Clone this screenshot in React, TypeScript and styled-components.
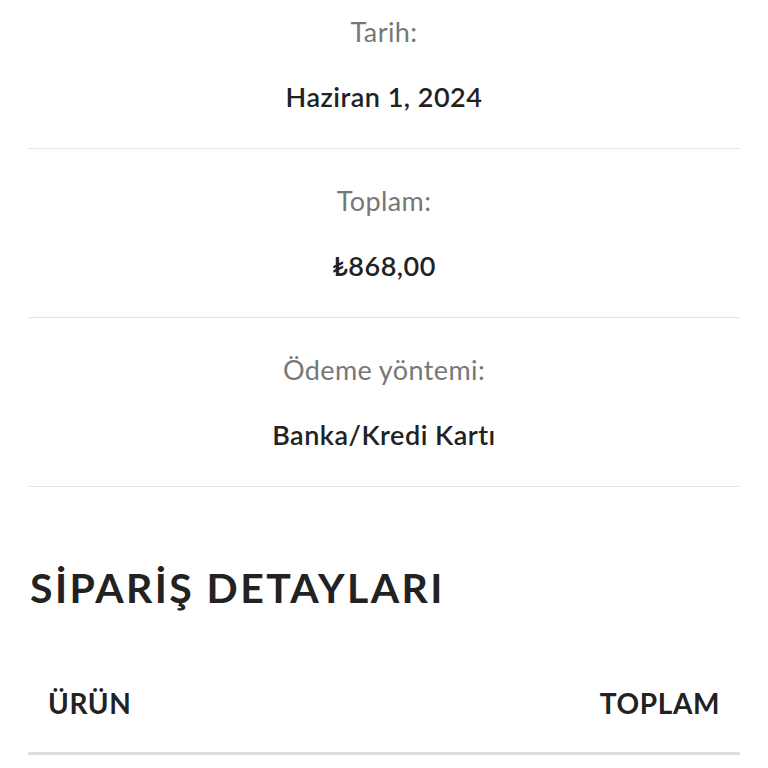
import React from "react";
import styled, { createGlobalStyle } from "styled-components";

const GlobalStyle = createGlobalStyle`
  html, body {
    margin: 0;
    padding: 0;
    background: #fff;
  }
  body {
    font-family: Lato, "Noto Sans", "Liberation Sans", sans-serif;
    color: #222;
  }
`;

const Page = styled.div`
  padding: 0 28px;
  overflow: hidden;
  height: 768px;
  box-sizing: border-box;
`;

const Overview = styled.ul`
  list-style: none;
  margin: 0;
  padding: 0;
`;

const Item = styled.li`
  display: flex;
  flex-direction: column;
  align-items: center;
  gap: 26px;
  padding: 32px 0;
  border-bottom: 1px solid #e4e4e4;

  &:first-child {
    padding-top: 12px;
  }
`;

const Label = styled.span`
  font-size: 27px;
  line-height: 39px;
  letter-spacing: 0.4px;
  color: #777;
`;

const Value = styled.strong`
  font-size: 27px;
  line-height: 39px;
  font-weight: 600;
  letter-spacing: 0.5px;
  color: #222;
`;

const Heading = styled.h2`
  margin: 76px 0 0 2px;
  font-size: 41px;
  line-height: 50px;
  font-weight: 700;
  letter-spacing: 2.4px;
  color: #222;
`;

const Table = styled.table`
  width: 100%;
  margin-top: 71px;
  border-collapse: collapse;
`;

const Th = styled.th<{ $align?: "left" | "right" }>`
  text-align: ${(p) => p.$align || "left"};
  padding: 0 20px 30px;
  font-size: 28px;
  line-height: 38px;
  font-weight: 700;
  letter-spacing: 0.6px;
  color: #222;
  border-bottom: 3px solid #ddd;
`;

const rows = [
  { label: "Tarih:", value: "Haziran 1, 2024" },
  { label: "Toplam:", value: "₺868,00" },
  { label: "Ödeme yöntemi:", value: "Banka/Kredi Kartı" },
];

export default function App() {
  return (
    <>
      <GlobalStyle />
      <Page>
        <Overview>
          {rows.map((r) => (
            <Item key={r.label}>
              <Label>{r.label}</Label>
              <Value>{r.value}</Value>
            </Item>
          ))}
        </Overview>
        <Heading>SİPARİŞ DETAYLARI</Heading>
        <Table>
          <thead>
            <tr>
              <Th>ÜRÜN</Th>
              <Th $align="right">TOPLAM</Th>
            </tr>
          </thead>
        </Table>
      </Page>
    </>
  );
}
